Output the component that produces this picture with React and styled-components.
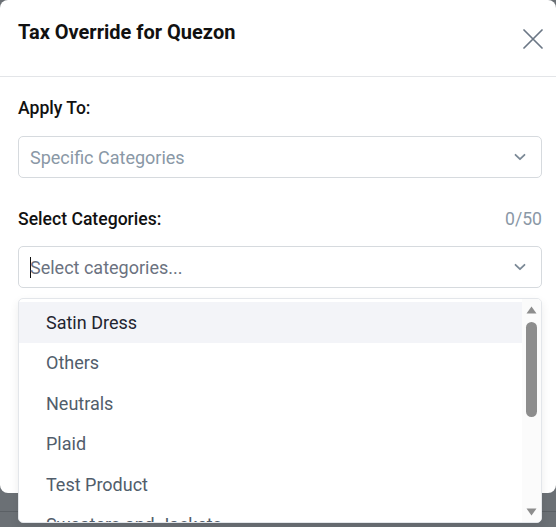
import React, { useState } from "react";
import styled, { createGlobalStyle } from "styled-components";

const GlobalStyle = createGlobalStyle`
  * { box-sizing: border-box; }
  html, body {
    margin: 0;
    padding: 0;
    height: 100%;
    font-family: Roboto, "Noto Sans", "Liberation Sans", sans-serif;
  }
  body {
    background: #6b7075;
    overflow: hidden;
  }
`;

const categories = [
  "Satin Dress",
  "Others",
  "Neutrals",
  "Plaid",
  "Test Product",
  "Sweaters and Jackets",
  "Accessories",
  "Denim",
  "Footwear",
  "Bags",
  "Linen",
];

export default function App() {
  const [active] = useState(0);

  return (
    <>
      <GlobalStyle />
      <Page>
        <Modal>
          <Header>
            <Title>Tax Override for Quezon</Title>
            <CloseButton aria-label="Close">
              <svg width="20" height="20" viewBox="0 0 20 20" fill="none">
                <path
                  d="M1 1L19 19M19 1L1 19"
                  stroke="#6b7785"
                  strokeWidth="1.7"
                  strokeLinecap="round"
                />
              </svg>
            </CloseButton>
          </Header>
          <Body>
            <Field>
              <LabelRow>
                <Label>Apply To:</Label>
              </LabelRow>
              <SelectBox>
                <SelectText $muted>Specific Categories</SelectText>
                <Chevron />
              </SelectBox>
            </Field>
            <Field $gapTop>
              <LabelRow>
                <Label>Select Categories:</Label>
                <Counter>0/50</Counter>
              </LabelRow>
              <Combo>
                <SelectBox>
                  <Caret />
                  <SelectText>Select categories...</SelectText>
                  <Chevron />
                </SelectBox>
                <Dropdown>
                  <OptionList>
                    {categories.map((name, i) => (
                      <Option key={name} $active={i === active}>
                        {name}
                      </Option>
                    ))}
                  </OptionList>
                  <ScrollTrack>
                    <ScrollArrow width="11" height="8" viewBox="0 0 11 8">
                      <path d="M5.5 0.5L10.5 7.5H0.5Z" fill="#8d8d8d" />
                    </ScrollArrow>
                    <Thumb />
                    <ScrollArrow width="11" height="8" viewBox="0 0 11 8">
                      <path d="M0.5 0.5H10.5L5.5 7.5Z" fill="#8d8d8d" />
                    </ScrollArrow>
                  </ScrollTrack>
                </Dropdown>
              </Combo>
            </Field>
          </Body>
        </Modal>
        <Backdrop />
      </Page>
    </>
  );
}

function Chevron() {
  return (
    <ChevronIcon width="12" height="8" viewBox="0 0 12 8" fill="none">
      <path
        d="M1.5 1.8L6 6.2L10.5 1.8"
        stroke="#7b8996"
        strokeWidth="1.8"
        strokeLinecap="round"
        strokeLinejoin="round"
      />
    </ChevronIcon>
  );
}

const Page = styled.div`
  display: flex;
  flex-direction: column;
  height: 527px;
`;

const Modal = styled.div`
  position: relative;
  z-index: 2;
  height: 493px;
  flex-shrink: 0;
  background: #ffffff;
  border-radius: 8px;
`;

const Backdrop = styled.div`
  flex: 1;
  border-bottom: 1px solid #5b6065;
  margin-bottom: 15px;
  background: #6b7075;
`;

const Header = styled.div`
  height: 77px;
  display: flex;
  align-items: flex-start;
  justify-content: space-between;
  padding: 20px 12px 0 18px;
  border-bottom: 1px solid #e3e5e8;
`;

const Title = styled.h2`
  margin: 0;
  font-size: 20px;
  line-height: 24px;
  font-weight: 700;
  color: #111111;
`;

const CloseButton = styled.button`
  margin-top: 8px;
  padding: 0;
  width: 22px;
  height: 22px;
  display: flex;
  align-items: center;
  justify-content: center;
  background: none;
  border: none;
  cursor: pointer;
`;

const Body = styled.div`
  padding: 19px 14px 0 18px;
  display: flex;
  flex-direction: column;
`;

const Field = styled.div`
  display: flex;
  flex-direction: column;
  gap: 16px;
  margin-top: ${(p) => (p.$gapTop ? "29px" : "0")};
`;

const LabelRow = styled.div`
  display: flex;
  justify-content: space-between;
  align-items: center;
  height: 24px;
`;

const Label = styled.span`
  font-size: 17.6px;
  font-weight: 500;
  color: #111111;
`;

const Counter = styled.span`
  font-size: 17.6px;
  color: #8a98a6;
`;

const Combo = styled.div`
  position: relative;
  margin-top: -1px;
`;

const SelectBox = styled.div`
  height: 42px;
  display: flex;
  align-items: center;
  padding: 0 15px 0 11px;
  border: 1px solid #d6dade;
  border-radius: 5px;
  background: #ffffff;
`;

const SelectText = styled.span`
  flex: 1;
  font-size: 18px;
  color: ${(p) => (p.$muted ? "#8a98a6" : "#6b7280")};
`;

const Caret = styled.span`
  width: 1px;
  height: 21px;
  background: #111111;
  margin-right: -1px;
`;

const ChevronIcon = styled.svg`
  flex-shrink: 0;
`;

const Dropdown = styled.div`
  position: absolute;
  top: 52px;
  left: 0;
  right: 0;
  height: 225px;
  display: flex;
  background: #ffffff;
  border: 1px solid #e3e6ea;
  border-radius: 5px;
  box-shadow: 0 4px 10px rgba(0, 0, 0, 0.08);
  overflow: hidden;
  z-index: 5;
`;

const OptionList = styled.div`
  flex: 1;
  overflow: hidden;
  padding-top: 3px;
`;

const Option = styled.div`
  padding: 0 27px;
  height: 40.5px;
  display: flex;
  align-items: center;
  font-size: 18px;
  color: ${(p) => (p.$active ? "#1f2530" : "#515d6b")};
  background: ${(p) => (p.$active ? "#f3f4f8" : "transparent")};
  cursor: pointer;
`;

const ScrollTrack = styled.div`
  width: 19px;
  flex-shrink: 0;
  display: flex;
  flex-direction: column;
  align-items: center;
  padding: 7px 0 6px;
  background: #fbfbfb;
`;

const ScrollArrow = styled.svg`
  flex-shrink: 0;
  &:last-child {
    margin-top: auto;
  }
`;

const Thumb = styled.div`
  margin-top: 8px;
  width: 11px;
  height: 95px;
  border-radius: 6px;
  background: #8d8d8d;
`;
